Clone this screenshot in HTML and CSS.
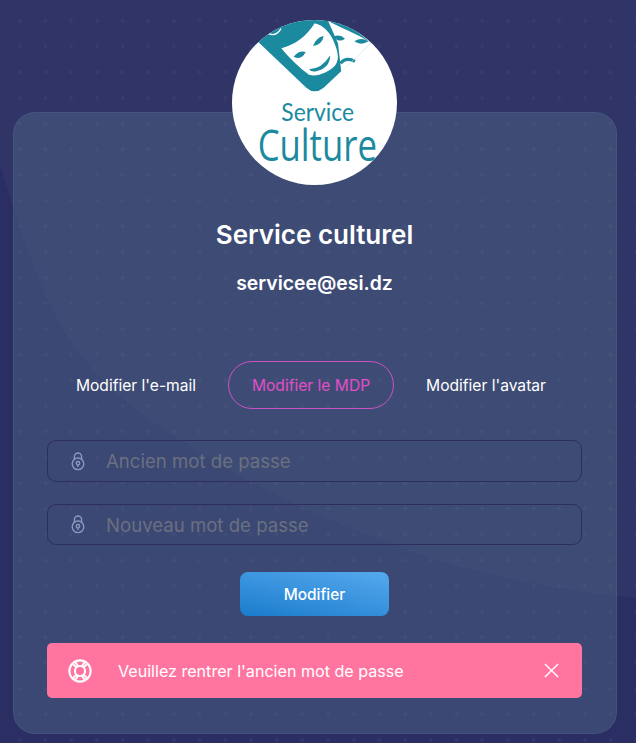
FILE: index.html
```html
<!DOCTYPE html>
<html lang="fr">
<head>
<meta charset="utf-8">
<title>Service culturel</title>
<link rel="stylesheet" href="styles.css">
</head>
<body>
<svg class="backdrop" viewBox="0 0 636 743" preserveAspectRatio="none" aria-hidden="true">
  <path class="backdrop-curve" d="M0 165C25 250 50 315 77 350C115 400 155 425 197 450C275 500 350 530 430 558C495 578 560 590 636 598V0H0Z"/>
</svg>
<main class="page">
  <section class="card">
    <div class="avatar">
      <svg viewBox="97 60 495 495" width="165" height="165" role="img" aria-label="Service Culture">
        <defs><clipPath id="disc"><circle cx="344.5" cy="307.5" r="247.5"/></clipPath></defs>
        <circle cx="344.5" cy="307.5" r="247.5" fill="#fff"/>
        <g clip-path="url(#disc)">
          <path fill="#1b8a9f" d="M175 125L320 263Q345 285 372 263L515 128L400 40H230Z"/>
          <path fill="#fff" d="M385 62C420 82 470 100 515 128L425 217L415 130Z"/>
          <path fill="#1b8a9f" d="M402 110Q420 100 436 116Q418 130 402 110ZM464 124Q485 110 506 124Q485 138 464 124Z"/>
          <path fill="none" stroke="#1b8a9f" stroke-width="9" d="M422 190Q440 170 466 184"/>
          <path fill="none" stroke="#d8eef2" stroke-width="2" d="M512 130L425 216"/>
          <path fill="#fff" d="M245 145C285 135 320 110 345 70C370 75 392 98 404 128C416 158 420 180 405 198C385 218 350 232 328 224C300 205 270 175 245 145Z"/>
          <path fill="#1b8a9f" d="M282 170Q298 150 318 156Q305 182 282 170ZM340 138Q350 112 372 108Q368 134 340 138ZM328 208Q365 208 392 166Q390 205 350 214Q335 217 328 208Z"/>
          <path fill="none" stroke="#fff" stroke-width="4" d="M205 100Q228 112 244 86"/>
          <text class="logo-service" x="354" y="363" text-anchor="middle" textLength="218" lengthAdjust="spacingAndGlyphs">Service</text>
          <text class="logo-culture" x="353" y="484" text-anchor="middle" textLength="358" lengthAdjust="spacingAndGlyphs">Culture</text>
        </g>
      </svg>
    </div>
    <h1 class="name">Service culturel</h1>
    <p class="email">servicee@esi.dz</p>
    <nav class="tabs">
      <a class="tab">Modifier l'e-mail</a>
      <a class="tab tab-active">Modifier le MDP</a>
      <a class="tab">Modifier l'avatar</a>
    </nav>
    <form class="form">
      <label class="field">
        <svg class="lock" viewBox="0 0 14 19" width="14" height="19" aria-hidden="true"><path d="M3.4 7.5V4.6a3.6 3.6 0 0 1 7.2 0v2.9"/><circle cx="7" cy="11.8" r="5.800"/><circle cx="7" cy="11.200" r="1.700"/><path d="M7 13v2"/></svg>
        <span class="placeholder">Ancien mot de passe</span>
      </label>
      <label class="field field-second">
        <svg class="lock" viewBox="0 0 14 19" width="14" height="19" aria-hidden="true"><path d="M3.4 7.5V4.6a3.6 3.6 0 0 1 7.2 0v2.9"/><circle cx="7" cy="11.8" r="5.800"/><circle cx="7" cy="11.200" r="1.700"/><path d="M7 13v2"/></svg>
        <span class="placeholder">Nouveau mot de passe</span>
      </label>
      <button class="submit" type="button">Modifier</button>
    </form>
    <div class="alert">
      <svg class="alert-icon" viewBox="0 0 26 26" width="24" height="24" aria-hidden="true"><circle cx="13" cy="13" r="11.500"/><circle cx="13" cy="13" r="5.500"/><path d="M4.800 4.800L9.100 9.100M21.200 4.800L16.900 9.100M4.800 21.200L9.100 16.900M21.200 21.200L16.900 16.900M8 3.500L11 8M18 3.500L15 8M8 22.500L11 18M18 22.500L15 18"/></svg>
      <span class="alert-text">Veuillez rentrer l'ancien mot de passe</span>
      <svg class="alert-close" viewBox="0 0 16 16" width="15" height="15" aria-hidden="true"><path d="M1 1L15 15M15 1L1 15"/></svg>
    </div>
  </section>
</main>
</body>
</html>
```
FILE: styles.css
```css
* { box-sizing: border-box; }
html, body { margin: 0; height: 743px; overflow: hidden; }
body {
  position: relative;
  background-color: #2b2e63;
  font-family: Inter, "Noto Sans", sans-serif;
  color: #fff;
}
.backdrop { position: absolute; inset: 0; width: 636px; height: 743px; }
.backdrop-curve { fill: #303466; }
.page {
  position: relative;
  height: 743px;
  padding: 112px 19px 9px 13px;
  background-image: radial-gradient(circle, rgba(255,255,255,.045) 1.5px, transparent 2px);
  background-size: 25.7px 25.7px;
  background-position: 7px 85px;
}
.card {
  position: relative;
  height: 622px;
  padding: 100px 34px 0 33px;
  border-radius: 22px;
  background: rgba(90, 118, 145, .36);
  border: 1px solid rgba(90, 110, 160, .25);
  display: flex;
  flex-direction: column;
  align-items: stretch;
}
.avatar {
  position: absolute;
  left: 218px;
  top: -93px;
  width: 165px;
  height: 165px;
}
.avatar svg { display: block; }
.logo-service { font-family: Lato, sans-serif; font-size: 76px; fill: #1b8a9f; }
.logo-culture { font-family: "Open Sans", sans-serif; font-size: 130px; font-weight: 500; fill: #1b8a9f; }
.name { margin: 5px 0 0; font-size: 26px; line-height: 34px; font-weight: 600; text-align: center; }
.email { margin: 18px 0 0; font-size: 19.4px; line-height: 26px; font-weight: 600; text-align: center; }
.tabs { display: flex; justify-content: center; gap: 7px; margin-top: 65px; height: 48px; padding-right: 7px; }
.tab {
  display: flex; align-items: center; justify-content: center;
  width: 170px; height: 48px; font-size: 15.6px; white-space: nowrap;
  border: 1px solid transparent; border-radius: 24px;
}
.tab-active { width: 166px; color: #e14fc6; border-color: #c953c0; }
.form { display: flex; flex-direction: column; margin-top: 31px; }
.field {
  display: flex; align-items: center; height: 42px;
  padding-left: 23px;
  border: 1px solid #2b2f5a; border-radius: 9px;
}
.field-second { height: 41px; margin-top: 22px; }
.lock { fill: none; stroke: #8d97bd; stroke-width: 1.4; }
.placeholder { margin-left: 21px; font-size: 18.6px; color: #6a7080; }
.submit {
  align-self: center; width: 149px; height: 44px; margin-top: 27px;
  border: 0; border-radius: 8px; color: #fff; font: inherit; font-size: 15.4px; font-weight: 500;
  background: linear-gradient(12deg, #1b7ccc, #56a9ee);
}
.alert {
  display: flex; align-items: center; height: 55px; margin-top: 27px;
  padding: 0 23px 0 21px; border-radius: 5px; background: #ff75a0;
}
.alert-icon { fill: none; stroke: #fff; stroke-width: 2.200; }
.alert-text { flex: 1; margin-left: 26px; font-size: 16.1px; }
.alert-close { fill: none; stroke: #fff; stroke-width: 1.5; }
```
